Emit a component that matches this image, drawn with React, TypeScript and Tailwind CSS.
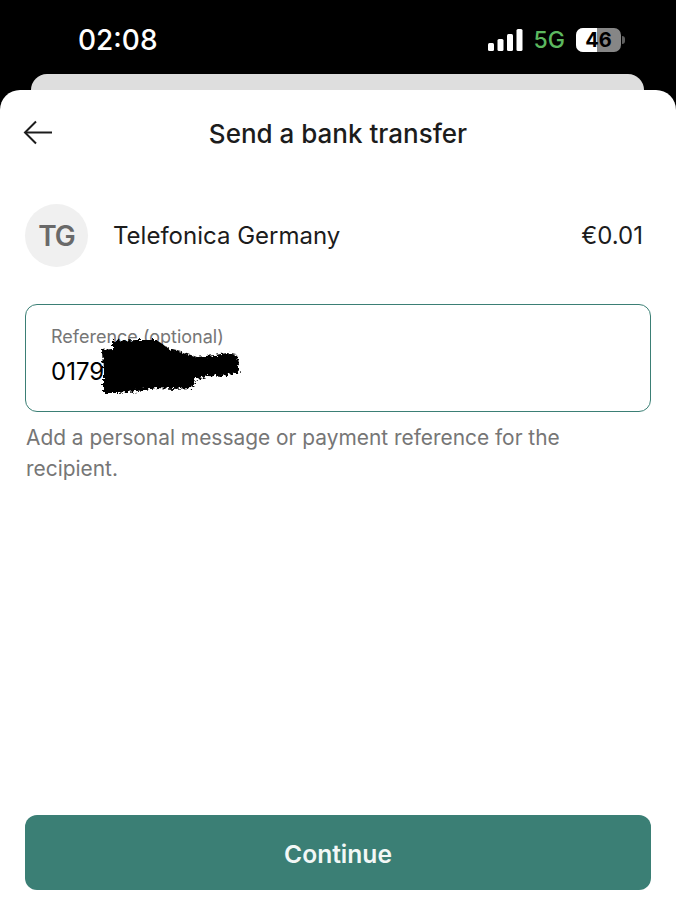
export default function App() {
  return (
    <div className="w-[676px] h-[900px] bg-black flex flex-col overflow-hidden font-['Inter',sans-serif]">
      {/* Status bar */}
      <div className="h-[74px] flex items-start justify-between pt-[24px] pl-[78px] pr-[51px]">
        <span className="text-white text-[28px] leading-[32px] font-medium">02:08</span>
        <div className="flex items-center gap-[11px] h-[32px]">
          <svg width="35" height="22" viewBox="0 0 35 22" fill="white">
            <rect x="0" y="14" width="6" height="8" rx="1.5" />
            <rect x="9.5" y="10" width="6" height="12" rx="1.5" />
            <rect x="19" y="5" width="6" height="17" rx="1.5" />
            <rect x="28.5" y="0" width="6" height="22" rx="1.5" />
          </svg>
          <span className="text-[#5cb85f] text-[23px] leading-[32px] font-medium">5G</span>
          <div className="flex items-center gap-[1px]">
            <div className="relative w-[45px] h-[24px] rounded-[7px] overflow-hidden bg-[#868686] flex items-center justify-center">
              <div className="absolute left-0 top-0 bottom-0 w-[21px] bg-white" />
              <span className="relative text-black text-[20px] leading-[24px] font-bold">46</span>
            </div>
            <div className="w-[3px] h-[8px] rounded-r-full bg-[#5e5e5e]" />
          </div>
        </div>
      </div>
      <div className="ml-[31px] mr-[32px] h-[16px] rounded-t-[16px] bg-[#dedede] shrink-0" />

      {/* Sheet */}
      <div className="flex-1 bg-white rounded-t-[20px] flex flex-col">
        <div className="relative h-[88px] flex items-center justify-center shrink-0">
          <svg className="absolute left-[23px] top-[29px]" width="30" height="26" viewBox="0 0 30 26" fill="none" stroke="#1c1c1c" strokeWidth="2">
            <path d="M29 13.5H2.5" />
            <path d="M13 2.5 2 13.5l11 11" />
          </svg>
          <h1 className="text-[#1c1c1c] text-[26px] leading-[32px] font-medium -mt-[1px]">Send a bank transfer</h1>
        </div>

        <div className="flex items-center mt-[26px] ml-[25px] mr-[33px]">
          <div className="w-[63px] h-[63px] rounded-full bg-[#f0f0f0] flex items-center justify-center text-[#696969] text-[28px] font-semibold tracking-[-1px]">TG</div>
          <span className="ml-[25px] text-[#1c1c1c] text-[24px] leading-[36px] mt-[1px]">Telefonica Germany</span>
          <span className="ml-auto text-[#1c1c1c] text-[24px]">€0.01</span>
        </div>

        <div className="relative mt-[37px] mx-[25px] h-[108px] border-[1.5px] border-[#3b7f75] rounded-[12px] pl-[25px] pt-[21px]">
          <div className="text-[#767676] text-[18px] leading-[22px]">Reference (optional)</div>
          <div className="text-black text-[24px] leading-[30px] mt-[9px]">0179</div>
          {/* scribbled-out part of the reference */}
          <svg className="absolute left-[71px] top-[30px]" width="150" height="68" viewBox="0 0 150 68" fill="black">
            <filter id="scribble" x="-10%" y="-10%" width="120%" height="120%">
              <feTurbulence type="fractalNoise" baseFrequency="0.35" numOctaves="2" seed="4" />
              <feDisplacementMap in="SourceGraphic" scale="7" />
            </filter>
            <path
              filter="url(#scribble)"
              d="M5 15 L15 14 L15 6 L40 5 L60 5 L72 14 L85 17 L100 22 L118 20 L130 18 L140 20 L142 38 L125 41 L110 40 L100 44 L95 53 L75 54 L60 53 L40 56 L20 58 L6 58 L6 35 Z"
            />
          </svg>
        </div>

        <p className="mt-[10px] mx-[25px] text-[#767676] text-[20.9px] leading-[31px] pl-[1px]">
          Add a personal message or payment reference for the recipient.
        </p>

        <button className="mt-auto mb-[10px] mx-[25px] h-[75px] shrink-0 rounded-[12px] bg-[#3b7f75] text-[#f2f7f6] text-[24.6px] font-semibold pt-[3px]">
          Continue
        </button>
      </div>
    </div>
  );
}
